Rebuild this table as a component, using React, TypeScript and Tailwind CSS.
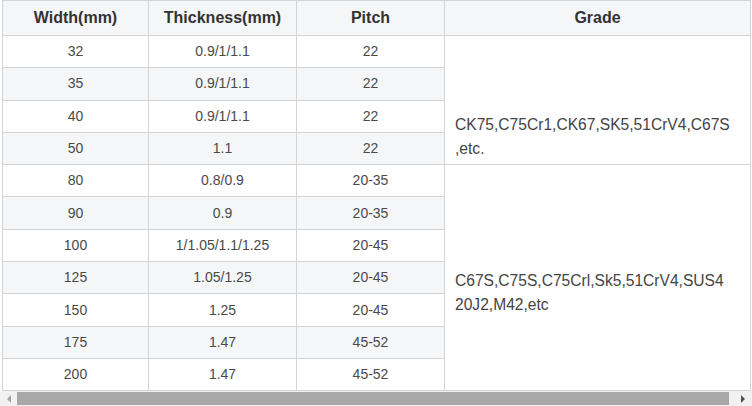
import React from "react";

const rows1 = [
  ["32", "0.9/1/1.1", "22"],
  ["35", "0.9/1/1.1", "22"],
  ["40", "0.9/1/1.1", "22"],
  ["50", "1.1", "22"],
];
const rows2 = [
  ["80", "0.8/0.9", "20-35"],
  ["90", "0.9", "20-35"],
  ["100", "1/1.05/1.1/1.25", "20-45"],
  ["125", "1.05/1.25", "20-45"],
  ["150", "1.25", "20-45"],
  ["175", "1.47", "45-52"],
  ["200", "1.47", "45-52"],
];

const td = "border border-[#d4d4d4] text-center text-[14px] text-[#4a4a4a] h-[32.3px] p-0";

export default function App() {
  let idx = 0;
  const renderRow = (r: string[], grade: React.ReactNode | null) => {
    const striped = idx % 2 === 1;
    idx++;
    const bg = striped ? "bg-[#f5f6f8]" : "bg-white";
    return (
      <tr key={r[0]} className={bg}>
        <td className={td}>{r[0]}</td>
        <td className={td}>{r[1]}</td>
        <td className={td}>{r[2]}</td>
        {grade}
      </tr>
    );
  };
  const gradeCls =
    "border border-[#d4d4d4] bg-white align-top text-left text-[15.6px] leading-[24px] text-[#444] pl-[10px] pr-[4px] whitespace-nowrap";
  return (
    <div className="w-[752px] h-[406px] bg-white overflow-hidden relative" style={{ fontFamily: '"Liberation Sans", Arial, sans-serif' }}>
      <div className="pl-[2px]">
        <table className="table-fixed border-collapse w-[748px]">
          <colgroup>
            <col className="w-[146px]" />
            <col className="w-[148px]" />
            <col className="w-[148px]" />
            <col className="w-[306px]" />
          </colgroup>
          <thead>
            <tr className="bg-[#f5f6f8]">
              <th className="border border-[#d4d4d4] h-[35px] text-[16px] font-bold text-[#333] text-center p-0">Width(mm)</th>
              <th className="border border-[#d4d4d4] h-[35px] text-[16px] font-bold text-[#333] text-center p-0">Thickness(mm)</th>
              <th className="border border-[#d4d4d4] h-[35px] text-[16px] font-bold text-[#333] text-center p-0">Pitch</th>
              <th className="border border-[#d4d4d4] h-[35px] text-[16px] font-bold text-[#333] text-center p-0">Grade</th>
            </tr>
          </thead>
          <tbody>
            {rows1.map((r, i) =>
              renderRow(
                r,
                i === 0 ? (
                  <td rowSpan={4} className={gradeCls + " pt-[77px]"}>
                    CK75,C75Cr1,CK67,SK5,51CrV4,C67S
                    <br />
                    ,etc.
                  </td>
                ) : null
              )
            )}
            {rows2.map((r, i) =>
              renderRow(
                r,
                i === 0 ? (
                  <td rowSpan={7} className={gradeCls + " pt-[104px]"}>
                    C67S,C75S,C75Crl,Sk5,51CrV4,SUS4
                    <br />
                    20J2,M42,etc
                  </td>
                ) : null
              )
            )}
          </tbody>
        </table>
      </div>
      <div className="absolute left-0 bottom-0 w-[752px] h-[15px] flex bg-[#f1f1f1]">
        <div className="w-[17px] h-full flex items-center justify-center">
          <div className="w-0 h-0 border-y-[4px] border-y-transparent border-r-[4px] border-r-[#a3a3a3]" />
        </div>
        <div className="flex-1 h-full py-[1px]">
          <div className="h-full bg-[#a8a8a8]" />
        </div>
        <div className="w-[23px] h-full flex items-center justify-center pl-[4px]">
          <div className="w-0 h-0 border-y-[4px] border-y-transparent border-l-[4px] border-l-[#505050]" />
        </div>
      </div>
    </div>
  );
}
